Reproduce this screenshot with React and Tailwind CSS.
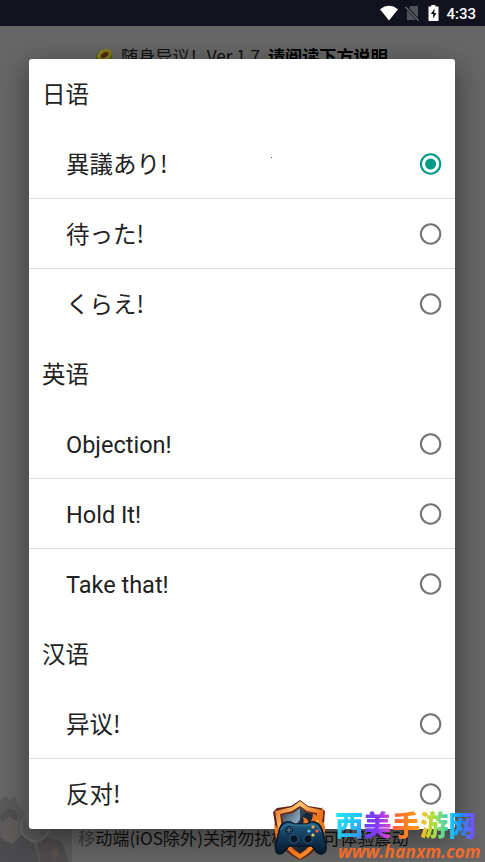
import React from "react";

const groups = [
  { title: "日语", items: ["異議あり!", "待った!", "くらえ!"] },
  { title: "英语", items: ["Objection!", "Hold It!", "Take that!"] },
  { title: "汉语", items: ["异议!", "反对!"] },
];

function StatusBar() {
  return (
    <div className="flex h-[26px] shrink-0 items-center justify-end bg-[#11121d] pr-[9px] text-white">
      <svg className="mr-[5px] h-[16px] w-[20px]" viewBox="0 0 20 16">
        <path d="M0 4.2Q9-2.6 18 4.2L9 15.5Z" fill="#fff" />
      </svg>
      <svg className="mr-[8px] h-[16px] w-[15px]" viewBox="0 0 15 16">
        <path d="M6 1h7v14H2V5Z" fill="#51515a" />
        <path d="M0.5 1.5L13.5 15.5" stroke="#11121d" strokeWidth="3" />
        <path d="M0.5 2L13.5 15.5" stroke="#6a6a72" strokeWidth="1.3" />
      </svg>
      <svg className="mr-[7px] h-[16px] w-[11px]" viewBox="0 0 11 16">
        <path d="M3.2 0h4.2v1.6h3.1V16H.5V1.6h2.7Z" fill="#fff" />
        <path d="M6.6 3.5L2.8 9h2.3v4.5L8.5 8H6.2Z" fill="#11121d" />
      </svg>
      <span className="pt-[3px] font-['Roboto'] text-[15px] leading-none font-medium">4:33</span>
    </div>
  );
}

function Ring() {
  return (
    <svg className="mr-[7px] h-[20px] w-[20px]" viewBox="0 0 20 20">
      <ellipse cx="10" cy="10.5" rx="9" ry="6.5" transform="rotate(-35 10 10.5)" fill="#4e4a08" />
      <ellipse cx="10.5" cy="9.3" rx="8" ry="5.5" transform="rotate(-35 10.5 9.3)" fill="#827a1a" />
      <ellipse cx="10.7" cy="9" rx="4.3" ry="2.4" transform="rotate(-35 10.7 9)" fill="#4f2c13" />
      <path d="M3 11L6 7L9 4" stroke="#8d9620" strokeWidth="1.2" fill="none" />
    </svg>
  );
}

function Portraits() {
  return (
    <svg className="h-[70px] w-[78px]" viewBox="0 0 78 70">
      <path d="M0 9L6 3L9 9L15 4L17 12L24 20L29 37H72V70H0Z" fill="#5b5a5b" />
      <path d="M0 30Q4 14 16 20L20 32L14 52L4 48Z" fill="#605c5b" />
      <path d="M0 24Q8 11 18 22L17 29L9 24L2 31Z" fill="#504f51" />
      <path d="M0 46L12 52L22 43L35 53L39 70H0Z" fill="#4b4b4e" />
      <path d="M37 52L47 45L62 50L69 70H40Z" fill="#4f4c4d" />
      <path d="M50 59L57 56L60 63L54 67Z" fill="#5c514c" />
      <circle cx="35" cy="35" r="14" fill="none" stroke="#686c64" strokeWidth="1.3" />
    </svg>
  );
}

function Radio({ checked }) {
  return (
    <svg className="h-[24px] w-[24px]" viewBox="0 0 24 24">
      <circle cx="11.6" cy="12" r="9.7" fill="none" stroke={checked ? "#009b88" : "#757575"} strokeWidth="2.1" />
      {checked && <circle cx="11.6" cy="12" r="5.5" fill="#009b88" />}
    </svg>
  );
}

function Shield() {
  return (
    <svg className="h-[62px] w-[56px] shrink-0" viewBox="0 0 56 62">
      <defs>
        <linearGradient id="rim" x1="0" y1="0" x2="1" y2="1">
          <stop offset="0" stopColor="#d95718" />
          <stop offset=".3" stopColor="#ffc373" />
          <stop offset=".6" stopColor="#ed721c" />
          <stop offset="1" stopColor="#ffa334" />
        </linearGradient>
        <linearGradient id="steel" x1="0" y1="0" x2="1" y2="1">
          <stop offset="0" stopColor="#273747" />
          <stop offset=".38" stopColor="#8fabc0" />
          <stop offset=".42" stopColor="#24394c" />
          <stop offset="1" stopColor="#101a29" />
        </linearGradient>
        <linearGradient id="pad" x1="0" y1="0" x2="0" y2="1">
          <stop offset="0" stopColor="#236087" />
          <stop offset=".45" stopColor="#133b5c" />
          <stop offset="1" stopColor="#06182d" />
        </linearGradient>
      </defs>
      <path d="M28 1L36 7L49 9L53 12L51 38Q46 53 28 61Q10 53 5 38L1 13L5 9L19 7Z" fill="#5e2417" />
      <path d="M28 2L36 8L50 11L48 37Q44 51 28 60Q12 51 7 37L3 12L20 8Z" fill="url(#rim)" />
      <path d="M28 7L35 12L45 14L44 36Q40 48 28 55Q15 47 11 36L8 15L20 12Z" fill="#6b2b19" />
      <path d="M28 9L35 14L43 16L42 36Q38 48 28 54Q17 47 13 35L10 16L21 14Z" fill="url(#steel)" />
      <path d="M28 9L35 14L43 16L42 36Q38 48 28 54Z" fill="#132635" opacity=".75" />
      <path d="M26 29Q34 25 31 18Q37 20 37 25Q41 20 41 14L45 17Q50 13 51 7Q52 17 50 22Q55 25 52 38L46 29L39 27Z" fill="#ee741c" />
      <path d="M33 28Q38 27 38 22Q40 28 46 20Q46 25 49 30Z" fill="#ffc042" />
      <path d="M2 24L7 31L4 42Z" fill="#ee741c" />
      <path d="M12 24Q18 21 22 25H35Q39 21 45 24Q49 26 51 34L54 46Q55 55 49 55Q45 55 40 47H17Q11 55 8 55Q2 55 4 45L7 32Q8 26 12 24Z" fill="url(#pad)" stroke="#071727" strokeWidth="1.5" />
      <path d="M9 31Q12 25 18 26H39Q45 25 49 33" stroke="#3d88aa" strokeWidth=".9" fill="none" />
      <path d="M17 27V35M13 31H21" stroke="#08182a" strokeWidth="3" />
      <path d="M17 28V34M14 31H20" stroke="#5f8ba5" strokeWidth="1" />
      <circle cx="22" cy="40" r="4.2" fill="#071524" stroke="#2b617f" />
      <circle cx="36" cy="40" r="4.2" fill="#071524" stroke="#2b617f" />
      <circle cx="41" cy="28" r="1.6" fill="#ffb23b" />
      <circle cx="45" cy="32" r="1.6" fill="#ff5843" />
      <circle cx="37" cy="32" r="1.6" fill="#55c5f0" />
      <circle cx="41" cy="36" r="1.6" fill="#f8d349" />
    </svg>
  );
}

function Watermark() {
  return (
    <div className="absolute top-[799px] left-[272px] flex">
      <Shield />
      <div className="ml-[7px] pt-[6px] whitespace-nowrap">
        <div className="flex font-['Noto_Sans_CJK_SC',sans-serif] text-[28.3px] leading-[38px] font-black">
          <span className="bg-gradient-to-br from-[#20f0f0] via-[#24c8f5] to-[#3a82fa] bg-clip-text text-transparent">西</span>
          <span className="bg-gradient-to-r from-[#5e43fa] via-[#8b35f5] to-[#e840c0] bg-clip-text text-transparent">美</span>
          <span className="bg-gradient-to-r from-[#ff5a46] via-[#ff8020] to-[#ff9b23] bg-clip-text text-transparent">手</span>
          <span className="bg-gradient-to-r from-[#ffb81e] via-[#a5e03c] to-[#22d0b0] bg-clip-text text-transparent">游</span>
          <span className="bg-gradient-to-r from-[#21d8ed] via-[#2880ff] to-[#7a3cff] bg-clip-text text-transparent">网</span>
        </div>
        <div className="mt-[-1px] ml-[3px] h-[19px] font-['Open_Sans',sans-serif] text-[17.5px] leading-[19px] font-bold text-[#f16b2b] italic">
          www.hanxm.com
        </div>
      </div>
    </div>
  );
}

export default function App() {
  return (
    <div className="relative flex h-[862px] w-[485px] flex-col overflow-hidden bg-[#666] font-['Roboto','Noto_Sans_CJK_SC',sans-serif]">
      <StatusBar />
      <div className="flex h-[60px] items-center pl-[94px] text-[17.15px] whitespace-nowrap text-[#111]">
        <Ring />
        <span className="font-['Noto_Sans_CJK_SC',sans-serif]">随身异议！Ver 1.7&nbsp;</span>
        <span className="ml-[4px] font-['Noto_Sans_CJK_SC',sans-serif] font-bold text-black">请阅读下方说明</span>
      </div>
      <div className="mt-auto flex h-[70px] items-end">
        <Portraits />
        <span className="mb-[10px] font-['Noto_Sans_CJK_SC',sans-serif] text-[17.15px] leading-[28px] whitespace-nowrap text-[#111]">
          <span className="text-[#3c3c3c]">移</span>动端(iOS除外)关闭勿扰模式即可体验震动
        </span>
      </div>

      <div className="absolute top-[59px] left-[29px] h-[770px] w-[426px] overflow-hidden rounded-[3px] bg-white text-[23.5px] leading-none text-[#212121] shadow-[0_9px_28px_2px_rgba(0,0,0,0.4)]">
        {groups.map((group, g) => (
          <section key={group.title}>
            <h2 className="flex h-[70px] items-center pt-[3px] pl-[13px]">{group.title}</h2>
            {group.items.map((label, i) => (
              <div
                key={label}
                className={
                  i < group.items.length - 1
                    ? "flex h-[70px] items-center justify-between border-b border-[#dedede] pr-[12px] pl-[37px]"
                    : "flex h-[70px] items-center justify-between pr-[12px] pl-[37px]"
                }
              >
                <span
                  lang={g === 0 ? "ja" : "zh-CN"}
                  className={g === 1 ? "pt-[4px]" : "font-['Noto_Sans_CJK_SC',sans-serif]"}
                >
                  {label}
                </span>
                <Radio checked={g === 0 && i === 0} />
              </div>
            ))}
          </section>
        ))}
      </div>
      <div className="absolute top-[157px] left-[271px] h-px w-px bg-[#555]" />
      <Watermark />
    </div>
  );
}
